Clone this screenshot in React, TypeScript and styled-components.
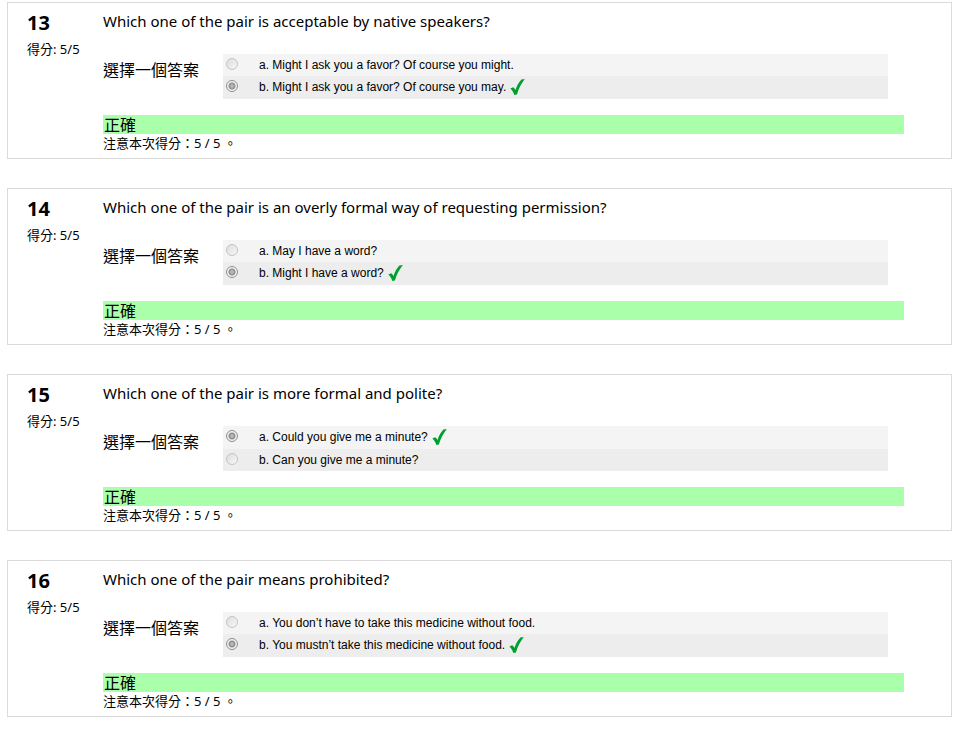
import React from "react";
import styled, { createGlobalStyle } from "styled-components";

const GlobalStyle = createGlobalStyle`
  * { box-sizing: border-box; }
  body {
    margin: 0;
    background: #fff;
    color: #000;
    font-family: "Noto Sans", "Noto Sans CJK TC", sans-serif;
    font-size: 16px;
  }
`;

const Quiz = styled.main`
  display: flex;
  flex-direction: column;
  gap: 29px;
  padding: 2px 6px 12px 7px;
`;

const Card = styled.section`
  display: grid;
  grid-template-columns: 76px minmax(0, 1fr);
  padding: 8px 47px 6px 19px;
  border: 1px solid #dadada;
`;

const Info = styled.div`
  display: flex;
  flex-direction: column;
`;

const Number = styled.h2`
  margin: 0;
  font-size: 20px;
  line-height: 24px;
  font-weight: 700;
`;

const Score = styled.p`
  margin: 4px 0 0;
  font-size: 13px;
  line-height: 20px;
  white-space: nowrap;
`;

const Question = styled.p`
  margin: 0;
  font-size: 15px;
  line-height: 20px;
`;

const AnswerBlock = styled.fieldset`
  display: grid;
  grid-template-columns: 120px minmax(0, 1fr);
  align-items: start;
  margin: 23px 16px 16px 0;
  padding: 0;
  border: 0;
  min-width: 0;
`;

const Prompt = styled.span`
  padding-top: 4px;
  line-height: 24px;
`;

const Options = styled.div`
  display: flex;
  flex-direction: column;
`;

const Option = styled.label<{ $shade: boolean; $marked: boolean }>`
  display: grid;
  grid-template-columns: 36px minmax(0, 1fr);
  min-height: ${(p) => (p.$marked ? 23 : 22)}px;
  background: ${(p) => (p.$shade ? "#ededed" : "#f4f4f4")};
  font-family: "Liberation Sans", Arial, sans-serif;
  font-size: 12px;
  line-height: 22px;
`;

const Radio = styled.input`
  appearance: none;
  width: 12px;
  height: 12px;
  margin: 4px 3px;
  border: 1px solid #c4c4c4;
  border-radius: 50%;
  background: linear-gradient(135deg, #dcdcdc, #f8f8f8);

  &:checked {
    border-color: #909090;
    background: radial-gradient(circle, #b8b8b8 0 1px, #8c8c8c 3px, #f2f2f2 4px);
  }
`;

const OptionText = styled.span`
  display: flex;
  gap: 4px;
`;

const Tick = styled.svg`
  flex: none;
  width: 15px;
  height: 16px;
  margin-top: 3px;
`;

const Verdict = styled.div`
  padding: 1px 0 0 1px;
  background: #aaffaa;
  line-height: 18px;
`;

const Grade = styled.p`
  margin: 0;
  font-size: 13px;
  line-height: 18px;
`;

type Item = { id: number; text: string; options: string[]; chosen: number };

const items: Item[] = [
  {
    id: 13,
    text: "Which one of the pair is acceptable by native speakers?",
    options: [
      "a. Might I ask you a favor? Of course you might.",
      "b. Might I ask you a favor? Of course you may.",
    ],
    chosen: 1,
  },
  {
    id: 14,
    text: "Which one of the pair is an overly formal way of requesting permission?",
    options: ["a. May I have a word?", "b. Might I have a word?"],
    chosen: 1,
  },
  {
    id: 15,
    text: "Which one of the pair is more formal and polite?",
    options: ["a. Could you give me a minute?", "b. Can you give me a minute?"],
    chosen: 0,
  },
  {
    id: 16,
    text: "Which one of the pair means prohibited?",
    options: [
      "a. You don’t have to take this medicine without food.",
      "b. You mustn’t take this medicine without food.",
    ],
    chosen: 1,
  },
];

function CorrectMark() {
  return (
    <Tick viewBox="0 0 15 16" role="img" aria-label="正確">
      <path
        d="M0.3 9.6 L3.2 8.2 C4.3 9 5 9.9 5.5 11 C7 6.6 8.8 3.4 11.4 0.6 L14.8 0.1 C11.4 4.6 8.8 9.4 6.9 15.4 L4.4 15.9 C3.4 13.4 2 11.2 0.3 9.6 Z"
        fill="#00a030"
      />
    </Tick>
  );
}

function QuestionCard({ item }: { item: Item }) {
  return (
    <Card>
      <Info>
        <Number>{item.id}</Number>
        <Score>得分: 5/5</Score>
      </Info>
      <div>
        <Question>{item.text}</Question>
        <AnswerBlock aria-labelledby={`prompt-${item.id}`}>
          <Prompt id={`prompt-${item.id}`}>選擇一個答案</Prompt>
          <Options>
            {item.options.map((option, i) => (
              <Option key={option} $shade={i === 1} $marked={i === item.chosen}>
                <Radio
                  type="radio"
                  name={`question-${item.id}`}
                  defaultChecked={i === item.chosen}
                  disabled
                />
                <OptionText>
                  {option}
                  {i === item.chosen && <CorrectMark />}
                </OptionText>
              </Option>
            ))}
          </Options>
        </AnswerBlock>
        <Verdict>正確</Verdict>
        <Grade>注意本次得分：5 / 5 。</Grade>
      </div>
    </Card>
  );
}

export default function App() {
  return (
    <>
      <GlobalStyle />
      <Quiz>
        {items.map((item) => (
          <QuestionCard key={item.id} item={item} />
        ))}
      </Quiz>
    </>
  );
}
